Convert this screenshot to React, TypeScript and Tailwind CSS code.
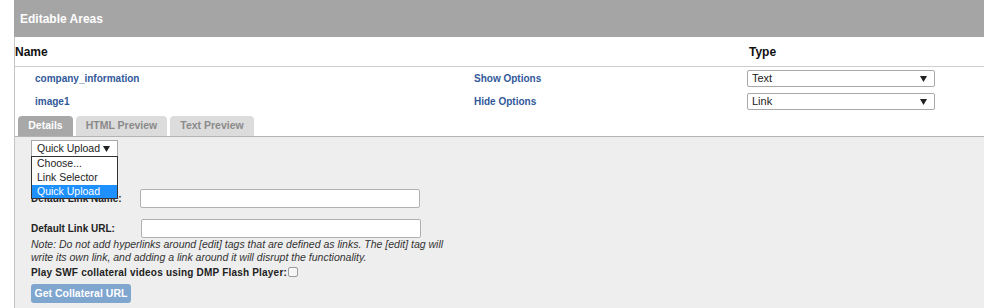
import React from "react";

const Arrow = () => (
  <svg width="7" height="6" viewBox="0 0 7 6" className="shrink-0">
    <path d="M0 0 H7 L3.5 6 Z" fill="#222" />
  </svg>
);

function FakeSelect({ value, className }: { value: string; className: string }) {
  return (
    <div
      className={`flex items-center justify-between bg-white border border-[#a9a9a9] rounded-[2px] pl-[4px] pr-[7px] text-[#222] ${className}`}
    >
      <span>{value}</span>
      <Arrow />
    </div>
  );
}

const areas = [
  { name: "company_information", action: "Show Options", type: "Text" },
  { name: "image1", action: "Hide Options", type: "Link" },
];

export default function App() {
  return (
    <div className="w-[984px] h-[308px] overflow-hidden bg-white font-['Liberation_Sans',Arial,sans-serif]">
      <div className="ml-[14px]">
        {/* Header */}
        <div className="h-[37px] bg-[#a5a5a6] pl-[6px] flex items-center text-white font-bold text-[12px]">
          Editable Areas
        </div>

        <div className="border-l border-[#c4c4c4]">
          {/* Column titles */}
          <div className="h-[30px] flex items-center border-b border-[#cfcfcf] text-[12px] font-bold text-[#111]">
            <div className="w-[734px]">Name</div>
            <div>Type</div>
          </div>

          {/* Rows */}
          {areas.map((a) => (
            <div key={a.name} className="h-[23px] flex items-center text-[10px] font-bold text-[#31599a]">
              <div className="w-[459px] pl-[20px]">{a.name}</div>
              <div className="w-[273px]">{a.action}</div>
              <FakeSelect value={a.type} className="w-[188px] h-[17px] font-normal text-[11px]" />
            </div>
          ))}

          {/* Tabs */}
          <div className="mt-[3px] ml-[3px] flex gap-[3px] text-[10.5px] font-bold">
            <div className="w-[55px] h-[20px] rounded-t-[4px] bg-[#a8a8a8] text-white flex items-center justify-center">
              Details
            </div>
            <div className="w-[91px] h-[20px] rounded-t-[4px] bg-[#dcdcdc] text-[#8a8a8a] flex items-center justify-center">
              HTML Preview
            </div>
            <div className="w-[84px] h-[20px] rounded-t-[4px] bg-[#dcdcdc] text-[#8a8a8a] flex items-center justify-center">
              Text Preview
            </div>
          </div>

          {/* Panel */}
          <div className="border-t border-[#b4b4b4] bg-[#eeeeee] h-[200px] pl-[16px] pt-[3px] text-[#222]">
            <div className="relative w-[87px]">
              <FakeSelect value="Quick Upload" className="w-[87px] h-[17px] rounded-none border-[#888] pl-[5px] pr-[7px] text-[10.5px]" />
              <div className="absolute left-0 top-[16px] w-[87px] bg-white border border-[#333] text-[10.5px] leading-[13px] z-10">
                <div className="pl-[5px] h-[14px]">Choose...</div>
                <div className="pl-[5px] h-[14px]">Link Selector</div>
                <div className="pl-[5px] h-[13px] bg-[#1e90ff] text-white">Quick Upload</div>
              </div>
            </div>

            <div className="mt-[32px] flex items-center text-[10px] font-bold">
              <div className="w-[109px]">Default Link Name:</div>
              <div className="w-[280px] h-[19px] bg-white border border-[#b0b0b0] rounded-[2px]" />
            </div>

            <div className="mt-[11px] flex items-center text-[10px] font-bold">
              <div className="w-[110px]">Default Link URL:</div>
              <div className="w-[280px] h-[19px] bg-white border border-[#b0b0b0] rounded-[2px]" />
            </div>

            <p className="text-[10.5px] italic leading-[13px] text-[#333] w-[420px]">
              Note: Do not add hyperlinks around [edit] tags that are defined as links. The [edit] tag will
              write its own link, and adding a link around it will disrupt the functionality.
            </p>

            <div className="mt-[2px] flex items-start text-[10px] font-bold h-[14px] leading-[14px] tracking-[0.2px]">
              <span>Play SWF collateral videos using DMP Flash Player:</span>
              <span className="ml-[1px] mt-[1px] w-[10px] h-[10px] rounded-[2px] border border-[#9a9a9a] bg-[#f6f6f6]" />
            </div>

            <button className="mt-[4px] w-[100px] h-[19px] rounded-[3px] bg-[#7fa6cf] text-white text-[10.5px] font-bold">
              Get Collateral URL
            </button>
          </div>
        </div>
      </div>
    </div>
  );
}
